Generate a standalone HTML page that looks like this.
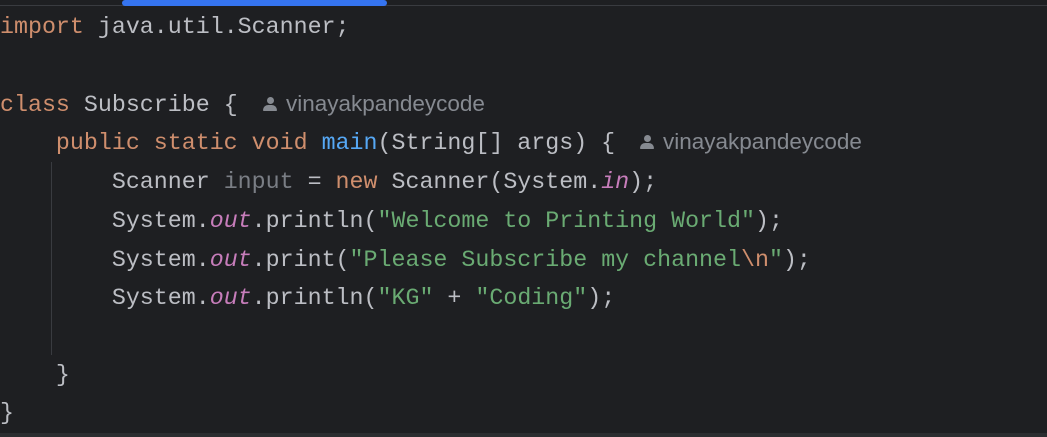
<!DOCTYPE html>
<html><head><style>
html,body{margin:0;padding:0;background:#1e1f22;width:1047px;height:437px;overflow:hidden;position:relative}
.top{position:absolute;left:0;top:5px;width:1047px;height:1px;background:#393b40}
.bar{position:absolute;left:122px;top:0;width:265px;height:6px;background:#3574f0;border-radius:3px}
.bot{position:absolute;left:0;top:433px;width:1047px;height:4px;background:#2b2d30}
.guide{position:absolute;left:51px;top:162px;width:1px;height:193px;background:#393b40}
.l{position:absolute;left:0;height:38px;line-height:38px;font-family:"Liberation Mono",monospace;font-size:23.3px;color:#bcbec4;white-space:pre}
.k{color:#cf8e6d}.m{color:#56a8f5}.s{color:#6aab73}.f{color:#c77dbb;font-style:italic}.u{color:#7a7e85}
.a{position:absolute;height:38px;line-height:38px;font-family:"Liberation Sans",sans-serif;font-size:22.5px;color:#868a91;white-space:pre}
.ic{display:inline-block;position:relative;width:14px;height:14px;vertical-align:0px;margin-right:9px}
.ic:before{content:"";position:absolute;left:3.5px;top:0;width:7px;height:7px;border-radius:50%;background:#868a91}
.ic:after{content:"";position:absolute;left:0;top:8px;width:14px;height:6px;border-radius:6px 6px 1px 1px;background:#868a91}
</style></head><body>
<div class="top"></div><div class="bar"></div><div class="bot"></div><div class="guide"></div>
<div class="l" style="top:8px"><span class="k">import</span> java.util.Scanner;</div>
<div class="l" style="top:86px"><span class="k">class</span> Subscribe {</div>
<div class="a" style="top:85px;left:263px"><span class="ic"></span>vinayakpandeycode</div>
<div class="l" style="top:124px">    <span class="k">public static void</span> <span class="m">main</span>(String[] args) {</div>
<div class="a" style="top:123px;left:640px"><span class="ic"></span>vinayakpandeycode</div>
<div class="l" style="top:163px">        Scanner <span class="u">input</span> = <span class="k">new</span> Scanner(System.<span class="f">in</span>);</div>
<div class="l" style="top:202px">        System.<span class="f">out</span>.println(<span class="s">"Welcome to Printing World"</span>);</div>
<div class="l" style="top:241px">        System.<span class="f">out</span>.print(<span class="s">"Please Subscribe my channel<span class="k">\n</span>"</span>);</div>
<div class="l" style="top:279px">        System.<span class="f">out</span>.println(<span class="s">"KG"</span> + <span class="s">"Coding"</span>);</div>
<div class="l" style="top:356px">    }</div>
<div class="l" style="top:394px">}</div>
</body></html>
